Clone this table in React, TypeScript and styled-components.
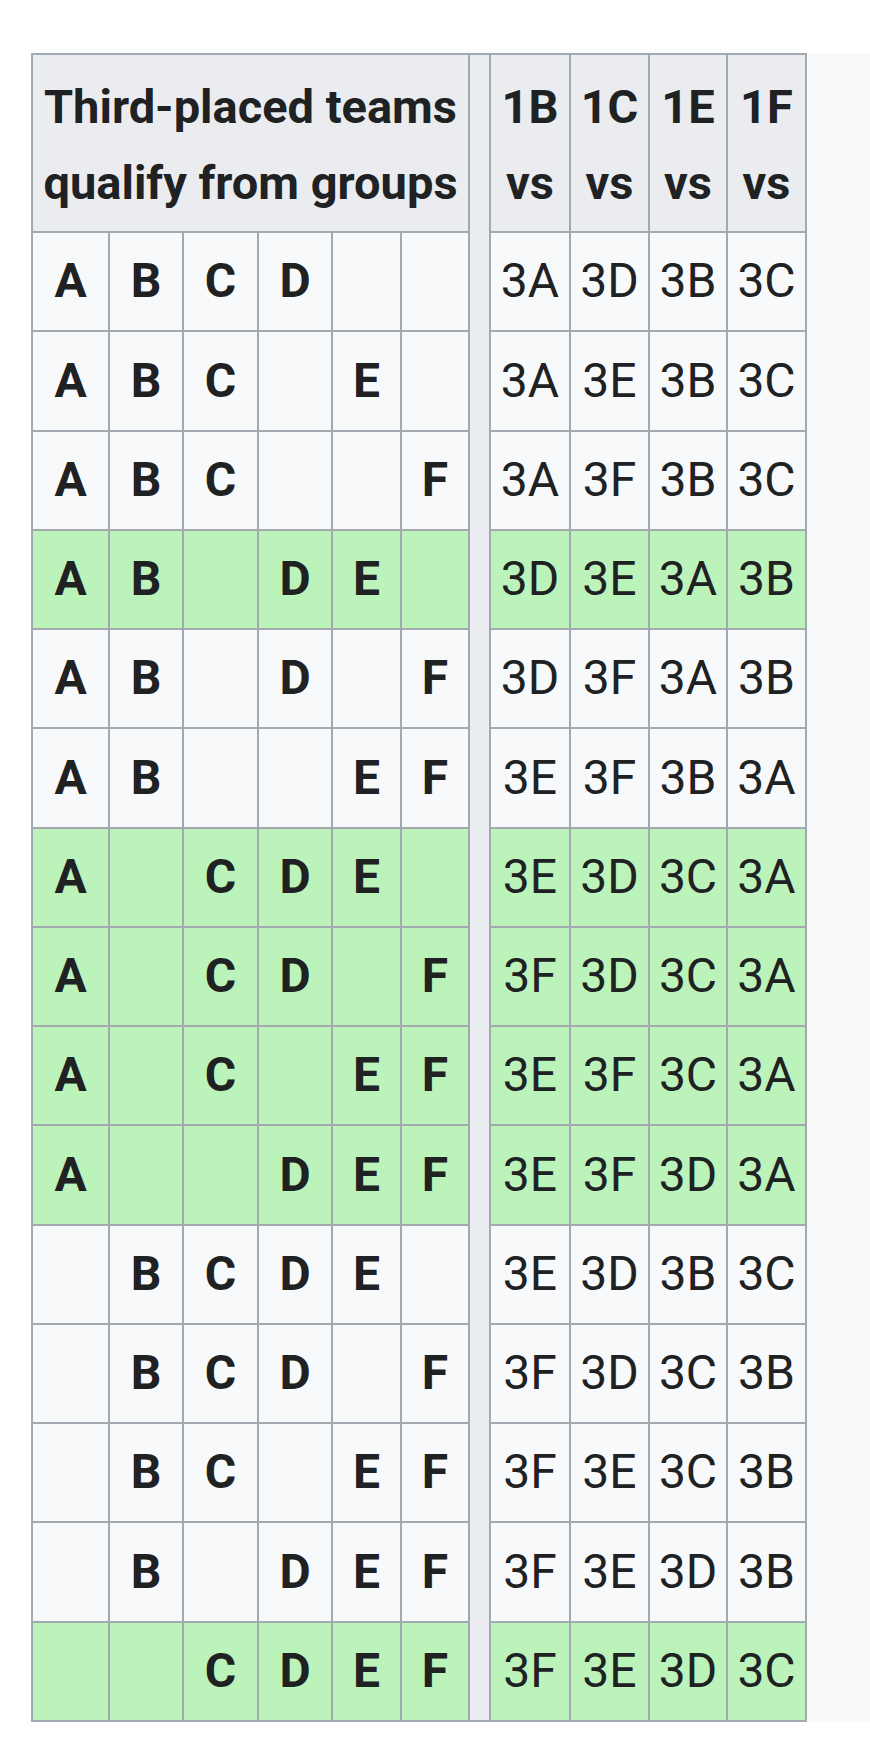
import * as React from "react"
import styled, { createGlobalStyle } from "styled-components"

const GlobalStyle = createGlobalStyle`
    html, body {
        margin: 0;
        padding: 0;
        background: #ffffff;
    }
    body {
        font-family: Roboto, "Liberation Sans", sans-serif;
        color: #202122;
    }
`

const Page = styled.div`
    padding: 53px 0 38px 31px;
`

const Scroller = styled.div`
    background: #f8f9fa;
    overflow: hidden;
`

const Table = styled.table`
    border-collapse: collapse;
    table-layout: fixed;
    width: 776px;
    font-size: 48px;
    line-height: 1.6;
    border: 2px solid #a2a9b1;
`

const HeadCell = styled.th`
    background: #eaecf0;
    border: 2px solid #a2a9b1;
    font-size: 47px;
    line-height: 76px;
    font-weight: 700;
    text-align: center;
    vertical-align: middle;
    padding: 4px 0 0;
    white-space: nowrap;
`

const Divider = styled.th`
    background: #eaecf0;
    border: 2px solid #a2a9b1;
    padding: 0;
`

const Row = styled.tr<{ $green?: boolean }>`
    height: 99.27px;
    background: ${(p) => (p.$green ? "#bbf3bb" : "#f8f9fa")};
`

const HeadRow = styled.tr`
    height: 178px;
`

const Cell = styled.td<{ $bold?: boolean }>`
    border: 2px solid #a2a9b1;
    text-align: center;
    vertical-align: middle;
    padding: 0;
    font-weight: ${(p) => (p.$bold ? 700 : 400)};
    white-space: nowrap;
`

const groupCols = [77, 74, 75, 74, 69, 68]
const matchCols = [80, 79, 78, 79]
const groups = ["A", "B", "C", "D", "E", "F"]

const rows: { q: string; m: string[]; green?: boolean }[] = [
    { q: "ABCD", m: ["3A", "3D", "3B", "3C"] },
    { q: "ABCE", m: ["3A", "3E", "3B", "3C"] },
    { q: "ABCF", m: ["3A", "3F", "3B", "3C"] },
    { q: "ABDE", m: ["3D", "3E", "3A", "3B"], green: true },
    { q: "ABDF", m: ["3D", "3F", "3A", "3B"] },
    { q: "ABEF", m: ["3E", "3F", "3B", "3A"] },
    { q: "ACDE", m: ["3E", "3D", "3C", "3A"], green: true },
    { q: "ACDF", m: ["3F", "3D", "3C", "3A"], green: true },
    { q: "ACEF", m: ["3E", "3F", "3C", "3A"], green: true },
    { q: "ADEF", m: ["3E", "3F", "3D", "3A"], green: true },
    { q: "BCDE", m: ["3E", "3D", "3B", "3C"] },
    { q: "BCDF", m: ["3F", "3D", "3C", "3B"] },
    { q: "BCEF", m: ["3F", "3E", "3C", "3B"] },
    { q: "BDEF", m: ["3F", "3E", "3D", "3B"] },
    { q: "CDEF", m: ["3F", "3E", "3D", "3C"], green: true },
]

const App: React.FC = () => {
    return (
        <>
            <GlobalStyle />
            <Page>
                <Scroller>
                    <Table>
                        <colgroup>
                            {groupCols.map((w, i) => (
                                <col key={"g" + i} style={{ width: w }} />
                            ))}
                            <col style={{ width: 21 }} />
                            {matchCols.map((w, i) => (
                                <col key={"m" + i} style={{ width: w }} />
                            ))}
                        </colgroup>
                        <tbody>
                            <HeadRow>
                                <HeadCell colSpan={6}>
                                    Third-placed teams
                                    <br />
                                    qualify from groups
                                </HeadCell>
                                <Divider rowSpan={16} />
                                {["1B", "1C", "1E", "1F"].map((t) => (
                                    <HeadCell key={t}>
                                        {t}
                                        <br />
                                        vs
                                    </HeadCell>
                                ))}
                            </HeadRow>
                            {rows.map((r) => (
                                <Row key={r.q} $green={r.green}>
                                    {groups.map((g) => (
                                        <Cell key={g} $bold>
                                            {r.q.includes(g) ? g : ""}
                                        </Cell>
                                    ))}
                                    {r.m.map((m, i) => (
                                        <Cell key={i}>{m}</Cell>
                                    ))}
                                </Row>
                            ))}
                        </tbody>
                    </Table>
                </Scroller>
            </Page>
        </>
    )
}

export default App
